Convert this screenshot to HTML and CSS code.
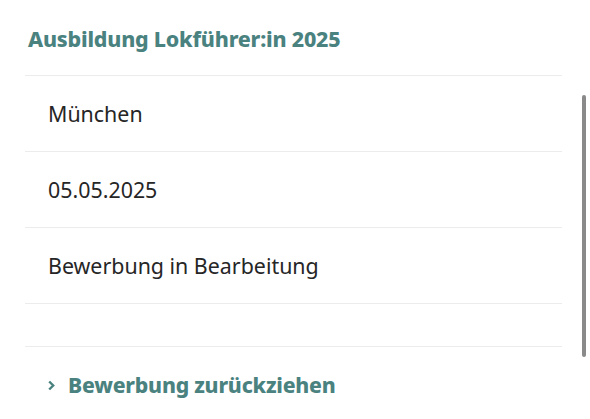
FILE: index.html
```html
<!DOCTYPE html>
<html lang="de">
<head>
<meta charset="utf-8">
<link rel="stylesheet" href="styles.css">
</head>
<body>
<div class="page">
  <div class="panel">
    <h2 class="title">Ausbildung Lokführer:in 2025</h2>
    <div class="row"><span class="value">München</span></div>
    <div class="row"><span class="value">05.05.2025</span></div>
    <div class="row"><span class="value">Bewerbung in Bearbeitung</span></div>
    <div class="row empty"></div>
    <a class="action" href="#">
      <svg class="chev" width="7" height="11" viewBox="0 0 7 11"><path d="M1.2 1.5 L5.2 5.5 L1.2 9.5" fill="none" stroke="currentColor" stroke-width="2.4"/></svg>
      <span>Bewerbung zurückziehen</span>
    </a>
  </div>
  <div class="scrollbar"></div>
</div>
</body>
</html>
```
FILE: styles.css
```css
html, body {
  margin: 0;
  padding: 0;
  background: #ffffff;
}
.page {
  position: relative;
  width: 590px;
  height: 419px;
  overflow: hidden;
  font-family: "Noto Sans", "Liberation Sans", sans-serif;
}
.panel {
  margin-left: 25px;
  width: 537px;
  display: flex;
  flex-direction: column;
}
.title {
  margin: 0;
  height: 76px;
  box-sizing: border-box;
  padding: 25px 0 0 3px;
  font-size: 21.4px;
  line-height: 28px;
  font-weight: 800;
  letter-spacing: -0.2px;
  color: #4a8280;
  border-bottom: 1px solid #ececec;
}
.row {
  height: 76px;
  box-sizing: border-box;
  display: flex;
  align-items: center;
  padding-left: 23px;
  border-bottom: 1px solid #ececec;
}
.row.empty {
  height: 43px;
}
.value {
  font-size: 21.4px;
  color: #262626;
}
.action {
  display: flex;
  align-items: center;
  gap: 13px;
  padding: 24px 0 0 23px;
  text-decoration: none;
  color: #4a8280;
  font-weight: 800;
  font-size: 21.2px;
  line-height: 28px;
  letter-spacing: -0.2px;
}
.chev {
  flex: none;
}
.scrollbar {
  position: absolute;
  left: 582px;
  top: 95px;
  width: 4px;
  height: 262px;
  border-radius: 2px;
  background: #8a8a8a;
}
```
